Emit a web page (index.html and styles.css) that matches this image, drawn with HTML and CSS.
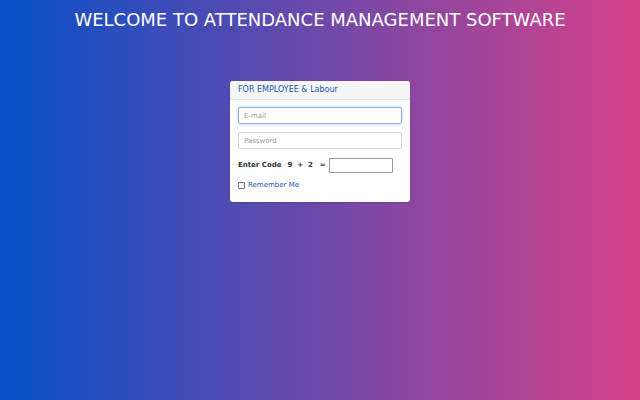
FILE: index.html
```html
<!DOCTYPE html>
<html>
<head>
<meta charset="utf-8">
<link rel="stylesheet" href="styles.css">
</head>
<body>
<div class="page">
  <h1 class="title">WELCOME TO ATTENDANCE MANAGEMENT SOFTWARE</h1>
  <div class="panel">
    <div class="panel-head">FOR EMPLOYEE &amp; Labour</div>
    <div class="panel-body">
      <input class="field focused" type="text" placeholder="E-mail">
      <input class="field" type="password" placeholder="Password">
      <div class="code-row">
        <span class="code-label">Enter Code</span>
        <span class="code-sum">9 &nbsp;+ &nbsp;2</span>
        <span class="code-eq">=</span>
        <input class="code-input" type="text">
      </div>
      <label class="remember"><span class="check"></span><span>Remember Me</span></label>
    </div>
  </div>
</div>
</body>
</html>
```
FILE: styles.css
```css
html, body {
  margin: 0;
  padding: 0;
  height: 100%;
}
body {
  background: linear-gradient(to right, #0550c8, #d6418b);
  font-family: "DejaVu Sans", sans-serif;
}
.page {
  display: flex;
  flex-direction: column;
  align-items: center;
  padding-top: 9px;
}
.title {
  margin: 0;
  color: #ffffff;
  font-weight: normal;
  font-size: 18px;
  line-height: 22px;
}
.panel {
  margin-top: 50px;
  width: 180px;
  background: #ffffff;
  border-radius: 3px;
  overflow: hidden;
  box-shadow: 0 1px 2px rgba(0,0,0,0.15);
}
.panel-head {
  background: #f5f5f5;
  border-bottom: 1px solid #e8e8e8;
  color: #1a56b8;
  font-size: 8px;
  height: 18px;
  line-height: 18px;
  padding: 0 8px;
}
.panel-body {
  display: flex;
  flex-direction: column;
  padding: 7px 8px 13px 8px;
}
.field {
  box-sizing: border-box;
  width: 164px;
  height: 17px;
  border: 1px solid #d6d6d6;
  border-radius: 2px;
  padding: 0 5px;
  font-family: "DejaVu Sans", sans-serif;
  font-size: 7px;
  color: #555;
  margin: 0 0 8px 0;
  outline: none;
}
.field::placeholder {
  color: #999;
}
.field.focused {
  border-color: #8fb6e6;
  box-shadow: 0 0 3px rgba(102,175,233,0.6);
}
.code-row {
  display: flex;
  align-items: center;
  white-space: nowrap;
  font-size: 7px;
  font-weight: bold;
  color: #333;
  height: 16px;
}
.code-label {
  margin-right: 6px;
}
.code-sum {
  margin-right: 7px;
}
.code-eq {
  margin-right: 3px;
}
.code-input {
  box-sizing: border-box;
  flex: 0 0 64px;
  width: 64px;
  height: 15px;
  border: 1px solid #999;
  border-radius: 1px;
  margin: 0;
  padding: 0 3px;
}
.remember {
  display: flex;
  align-items: center;
  margin-top: 8px;
  font-size: 7px;
  color: #1a56b8;
}
.check {
  box-sizing: border-box;
  width: 7px;
  height: 7px;
  border: 1px solid #777;
  border-radius: 1px;
  background: #fff;
  margin-right: 3px;
}
```
